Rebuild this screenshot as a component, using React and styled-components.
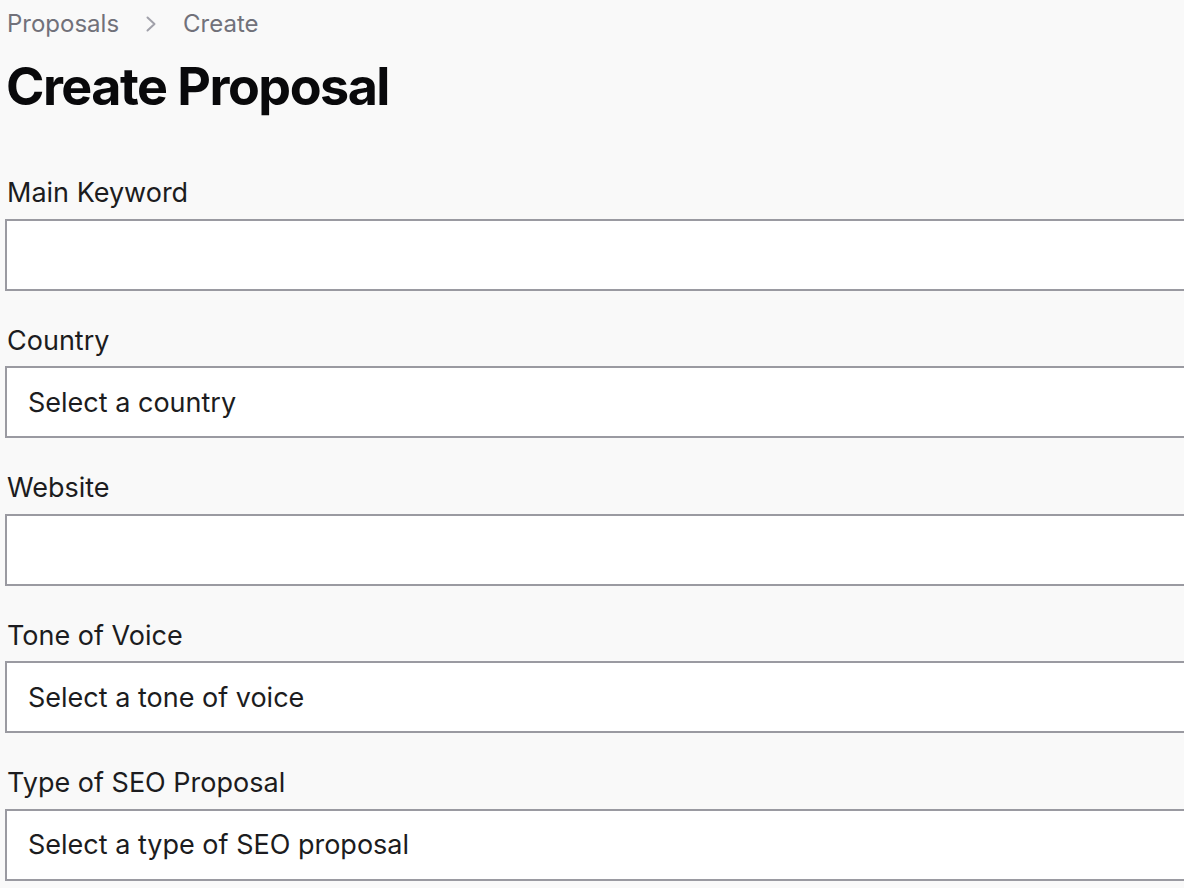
import React from "react";
import styled, { createGlobalStyle } from "styled-components";

const Global = createGlobalStyle`
  html, body { margin: 0; padding: 0; background: #f9f9f9; overflow: hidden; }
  body { font-family: Inter, "Noto Sans", sans-serif; color: #09090b; }
  * { box-sizing: border-box; }
`;

const Page = styled.main`
  width: 1220px;
  padding: 9px 0 0 5px;
  display: flex;
  flex-direction: column;
`;

const Breadcrumb = styled.nav`
  display: flex;
  align-items: center;
  gap: 26px;
  height: 30px;
  padding-left: 2px;
  font-size: 24px;
  color: #71717a;
`;

const Crumb = styled.span`
  line-height: 30px;
`;

const Title = styled.h1`
  margin: 21px 0 0 1px;
  font-size: 52px;
  line-height: 54px;
  font-weight: 700;
  letter-spacing: -1.5px;
  color: #09090b;
`;

const Form = styled.form`
  margin-top: 61px;
  display: flex;
  flex-direction: column;
  gap: 32px;
`;

const Field = styled.div`
  display: flex;
  flex-direction: column;
  gap: 10.5px;
`;

const Label = styled.label`
  font-size: 27px;
  line-height: 30px;
  padding: 3px 0 0 2px;
  color: #1c1c20;
`;

const Box = styled.div`
  height: 72px;
  background: #ffffff;
  border: 2px solid #9a9aa1;
  display: flex;
  align-items: center;
  padding-left: 21px;
  font-size: 27px;
  color: #1c1c20;
`;

const Chevron = () => (
  <svg width="12" height="16" viewBox="0 0 12 16" fill="none">
    <polyline points="2.5,1.5 9.5,8 2.5,14.5" stroke="#a1a1aa" strokeWidth="2" strokeLinecap="round" strokeLinejoin="round" />
  </svg>
);

const fields = [
  { label: "Main Keyword", value: "" },
  { label: "Country", value: "Select a country" },
  { label: "Website", value: "" },
  { label: "Tone of Voice", value: "Select a tone of voice" },
  { label: "Type of SEO Proposal", value: "Select a type of SEO proposal" },
];

export default function App() {
  return (
    <>
      <Global />
      <Page>
        <Breadcrumb>
          <Crumb>Proposals</Crumb>
          <Chevron />
          <Crumb>Create</Crumb>
        </Breadcrumb>
        <Title>Create Proposal</Title>
        <Form>
          {fields.map((f) => (
            <Field key={f.label}>
              <Label>{f.label}</Label>
              <Box>{f.value}</Box>
            </Field>
          ))}
        </Form>
      </Page>
    </>
  );
}
